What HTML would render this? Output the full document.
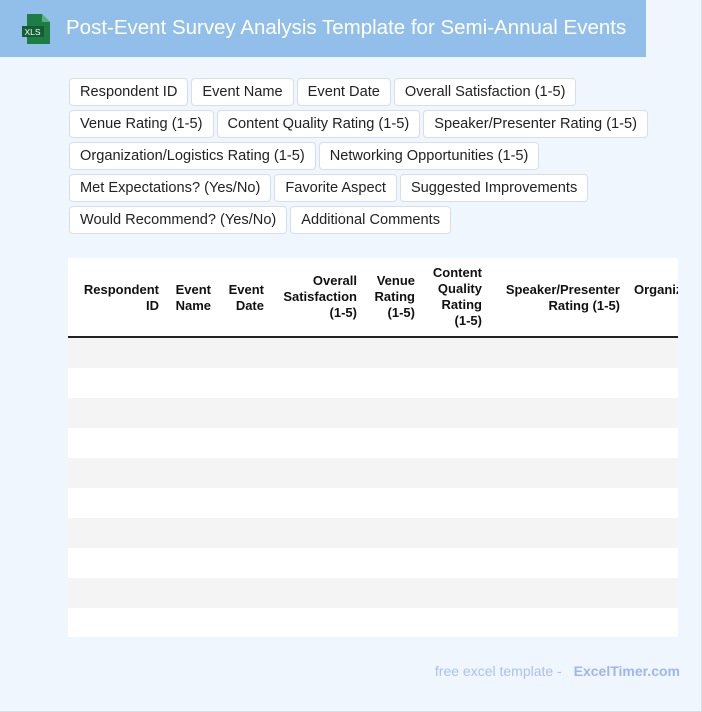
<!DOCTYPE html>
<html><head><style>
*{margin:0;padding:0;box-sizing:border-box}
body{width:702px;height:712px;background:#f0f6fe;font-family:"Liberation Sans",sans-serif;position:relative;overflow:hidden;border-right:1px solid #d6dde6;border-bottom:1px solid #d6dde6}
.hdr{position:absolute;left:0;top:0;width:646px;height:57px;background:#92bfea}
.hdr h1{position:absolute;left:66px;top:16px;font-size:20.5px;font-weight:normal;color:#fff;white-space:nowrap}
.chips{position:absolute;left:69px;top:78px}
.row{display:flex;gap:3px;margin-bottom:4px}
.chip{height:28px;line-height:27px;padding:0 10px;background:#fff;border:1px solid #d8dee6;border-radius:4px;font-size:14.6px;color:#222;white-space:nowrap}
.tbl{position:absolute;left:68px;top:258px;width:610px;height:379px;background:#fff;overflow:hidden}
.th{position:absolute;font-size:13px;font-weight:bold;color:#111;text-align:right;line-height:16px;white-space:nowrap}
.line{position:absolute;left:0;top:78px;width:610px;height:2px;background:#222}
.r{position:absolute;left:0;width:610px;height:30px}
.foot{position:absolute;right:21px;top:663px;font-size:14px;color:#a9c1ee}
.foot b{color:#9db7ec;margin-left:8px}
</style></head><body>
<div class="hdr">
<svg style="position:absolute;left:22px;top:14px" width="28" height="30" viewBox="0 0 28 30"><path d="M5 0H20L28 8V30H5Z" fill="#1e7d45"/><path d="M20 0V8H28Z" fill="#58b07a"/><rect x="0" y="12" width="22" height="11" fill="#155e34"/><text x="2.5" y="21" font-size="8.5" fill="#fff" font-family="Liberation Sans">XLS</text></svg>
<h1>Post-Event Survey Analysis Template for Semi-Annual Events</h1>
</div>
<div class="chips">
<div class="row"><span class="chip">Respondent ID</span><span class="chip">Event Name</span><span class="chip">Event Date</span><span class="chip">Overall Satisfaction (1-5)</span></div>
<div class="row"><span class="chip">Venue Rating (1-5)</span><span class="chip">Content Quality Rating (1-5)</span><span class="chip">Speaker/Presenter Rating (1-5)</span></div>
<div class="row"><span class="chip">Organization/Logistics Rating (1-5)</span><span class="chip">Networking Opportunities (1-5)</span></div>
<div class="row"><span class="chip">Met Expectations? (Yes/No)</span><span class="chip">Favorite Aspect</span><span class="chip">Suggested Improvements</span></div>
<div class="row"><span class="chip">Would Recommend? (Yes/No)</span><span class="chip">Additional Comments</span></div>
</div>
<div class="tbl">
<div class="th" style="right:519px;top:24px">Respondent<br>ID</div>
<div class="th" style="right:467px;top:24px">Event<br>Name</div>
<div class="th" style="right:414px;top:24px">Event<br>Date</div>
<div class="th" style="right:321px;top:15px">Overall<br>Satisfaction<br>(1-5)</div>
<div class="th" style="right:263px;top:15px">Venue<br>Rating<br>(1-5)</div>
<div class="th" style="right:196px;top:7px">Content<br>Quality<br>Rating<br>(1-5)</div>
<div class="th" style="right:58px;top:24px">Speaker/Presenter<br>Rating (1-5)</div>
<div class="th" style="left:566px;top:24px;text-align:left">Organization/Logistics</div>
<div class="line"></div>
<div class="r" style="top:80px;background:#f4f4f4"></div>
<div class="r" style="top:140px;background:#f4f4f4"></div>
<div class="r" style="top:200px;background:#f4f4f4"></div>
<div class="r" style="top:260px;background:#f4f4f4"></div>
<div class="r" style="top:320px;background:#f4f4f4"></div>
</div>
<div class="foot">free excel template - <b>ExcelTimer.com</b></div>
</body></html>
